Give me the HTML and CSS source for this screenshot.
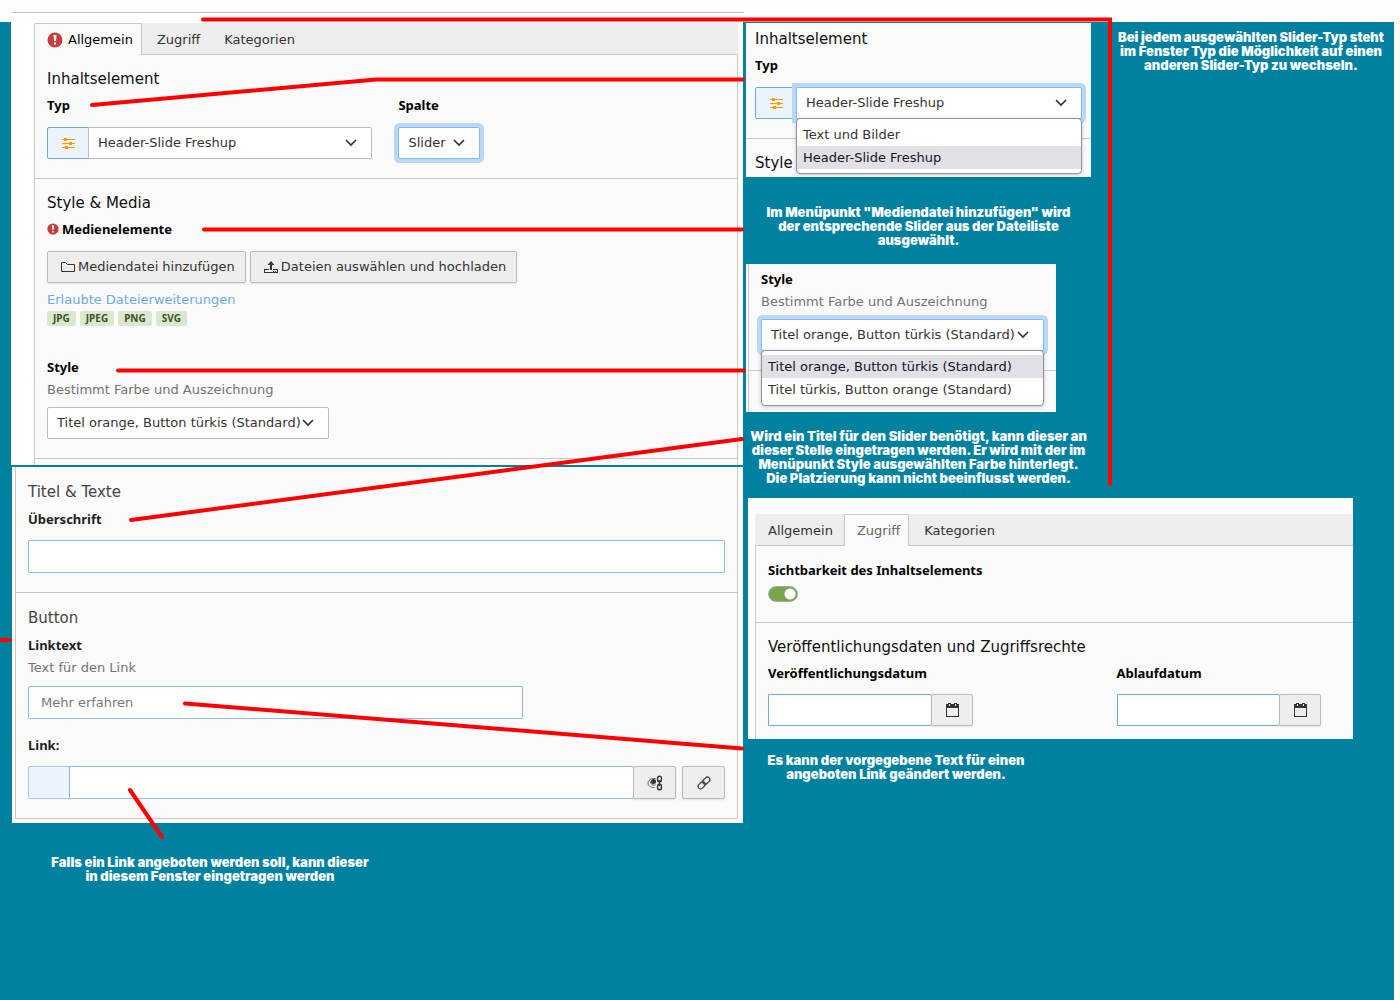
FILE: index.html
```html
<!DOCTYPE html>
<html lang="de">
<head>
    <meta charset="UTF-8">
    <meta name="viewport" content="width=device-width, initial-scale=1.0">
    <title>Slider Anleitung</title>
    <link rel="stylesheet" href="styles.css">
</head>
<body>
    <svg class="symbols" aria-hidden="true">
        <symbol id="icon-sliders" viewBox="0 0 16 16">
            <path fill="#ff9800" d="M2 4h13v1H2zM2 8h13v1H2zM2 12h13v1H2zM4 3h3v3H4zM9 7h3v3H9zM5 11h3v3H5z"/>
        </symbol>
        <symbol id="icon-error" viewBox="0 0 16 16">
            <circle cx="8" cy="8" r="7.500" fill="#c83c3c"/>
            <path fill="#fff" d="M6.500 3h3l-.5 6H7zM7 10.500h2v2H7z"/>
        </symbol>
        <symbol id="icon-folder" viewBox="0 0 16 16">
            <path fill="none" stroke="#333" d="M1.500 12.500v-9h4l2 2h7v7z"/>
        </symbol>
        <symbol id="icon-upload" viewBox="0 0 16 16">
            <path fill="#333" d="M8 2l3.500 4H9v5H7V6H4.500zM1 10h5v1H2v2h12v-2h-4v-1h5v4H1zM10 12h1v1h-1zM12 12h1v1h-1z"/>
        </symbol>
        <symbol id="icon-calendar" viewBox="0 0 16 16">
            <path fill="#333" fill-rule="evenodd" d="M2 2h2V1h3v1h3V1h3v1h2v13H2zM3 6v8h11V6zM5 2v2h1V2zM11 2v2h1V2z"/>
        </symbol>
        <symbol id="icon-link" viewBox="0 0 16 16">
            <g fill="none" stroke="#444" stroke-width="1.300" transform="rotate(-45 8 8)">
                <rect x="0.700" y="5.500" width="8" height="5" rx="2.500"/>
                <rect x="7.300" y="5.500" width="8" height="5" rx="2.500"/>
            </g>
        </symbol>
        <symbol id="icon-preview-link" viewBox="0 0 16 16">
            <path fill="none" stroke="#666" d="M8.500 3.500C4 3 1 5.500 1 8s2 4.500 6.500 4.500"/>
            <path fill="none" stroke="#666" d="M3.500 6.500c0 3 2 4 5 3.500"/>
            <circle cx="6.500" cy="6.500" r="2.500" fill="#333"/>
            <g fill="none" stroke="#333" stroke-width="1.400">
                <rect x="10.600" y="1.200" width="3.800" height="5.500" rx="1.800"/>
                <rect x="10.600" y="9.200" width="3.800" height="5.500" rx="1.800"/>
                <path d="M12.500 5v6"/>
            </g>
        </symbol>
    </svg>

    <div class="topbar"></div>

    <div class="board">
        <div class="column-left">
            <div class="shot shot-general">
                <div class="tabs">
                    <button class="tab active"><svg class="icon"><use href="#icon-error"/></svg>Allgemein</button>
                    <button class="tab">Zugriff</button>
                    <button class="tab">Kategorien</button>
                </div>
                <div class="panel">
                    <section class="section">
                        <h2>Inhaltselement</h2>
                        <div class="fields">
                            <div class="field field-type">
                                <label for="type">Typ</label>
                                <div class="input-group">
                                    <span class="addon"><svg class="icon"><use href="#icon-sliders"/></svg></span>
                                    <select id="type"><option>Header-Slide Freshup</option></select>
                                </div>
                            </div>
                            <div class="field">
                                <label for="column">Spalte</label>
                                <select id="column" class="focused"><option>Slider</option></select>
                            </div>
                        </div>
                    </section>
                    <section class="section">
                        <h2>Style &amp; Media</h2>
                        <p class="label"><svg class="icon-small"><use href="#icon-error"/></svg>Medienelemente</p>
                        <div class="buttons">
                            <button class="btn"><svg class="icon"><use href="#icon-folder"/></svg>Mediendatei hinzufügen</button>
                            <button class="btn"><svg class="icon"><use href="#icon-upload"/></svg>Dateien auswählen und hochladen</button>
                        </div>
                        <a class="extensions" href="#">Erlaubte Dateierweiterungen</a>
                        <div class="badges">
                            <span>JPG</span>
                            <span>JPEG</span>
                            <span>PNG</span>
                            <span>SVG</span>
                        </div>
                        <div class="field field-style">
                            <label for="style">Style</label>
                            <p class="description">Bestimmt Farbe und Auszeichnung</p>
                            <select id="style" class="select-style"><option>Titel orange, Button türkis (Standard)</option></select>
                        </div>
                    </section>
                </div>
            </div>

            <div class="shot shot-texts">
                <div class="panel">
                    <section class="section">
                        <h2>Titel &amp; Texte</h2>
                        <label for="headline">Überschrift</label>
                        <input type="text" id="headline">
                    </section>
                    <section class="section">
                        <h2>Button</h2>
                        <label for="linktext">Linktext</label>
                        <p class="description">Text für den Link</p>
                        <input type="text" id="linktext" class="input-medium" value="Mehr erfahren">
                        <label for="link" class="label-link">Link:</label>
                        <div class="link-row">
                            <div class="input-group">
                                <span class="addon"></span>
                                <input type="text" id="link">
                                <button class="btn btn-icon" aria-label="Vorschau"><svg class="icon"><use href="#icon-preview-link"/></svg></button>
                            </div>
                            <button class="btn btn-icon" aria-label="Link"><svg class="icon"><use href="#icon-link"/></svg></button>
                        </div>
                    </section>
                </div>
            </div>

            <p class="note note-link">Falls ein Link angeboten werden soll, kann dieser<br>in diesem Fenster eingetragen werden</p>
        </div>

        <div class="column-right">
            <div class="row">
                <div class="stack">
                    <div class="shot shot-type">
                        <section class="section">
                            <h2>Inhaltselement</h2>
                            <label for="type-open">Typ</label>
                            <div class="input-group dropdown">
                                <span class="addon"><svg class="icon"><use href="#icon-sliders"/></svg></span>
                                <select id="type-open" class="focused"><option>Header-Slide Freshup</option></select>
                                <ul class="menu menu-type">
                                    <li>Text und Bilder</li>
                                    <li class="selected">Header-Slide Freshup</li>
                                </ul>
                            </div>
                        </section>
                        <section class="section">
                            <h2>Style</h2>
                        </section>
                    </div>
                    <p class="note note-media">Im Menüpunkt "Mediendatei hinzufügen" wird<br>der entsprechende Slider aus der Dateiliste<br>ausgewählt.</p>
                    <div class="shot shot-style">
                        <section class="section">
                            <label for="style-open">Style</label>
                            <p class="description">Bestimmt Farbe und Auszeichnung</p>
                            <div class="dropdown">
                                <select id="style-open" class="select-style focused"><option>Titel orange, Button türkis (Standard)</option></select>
                                <ul class="menu">
                                    <li class="selected">Titel orange, Button türkis (Standard)</li>
                                    <li>Titel türkis, Button orange (Standard)</li>
                                </ul>
                            </div>
                        </section>
                        <div class="rest"></div>
                    </div>
                    <p class="note note-title">Wird ein Titel für den Slider benötigt, kann dieser an<br>dieser Stelle eingetragen werden. Er wird mit der im<br>Menüpunkt Style ausgewählten Farbe hinterlegt.<br>Die Platzierung kann nicht beeinflusst werden.</p>
                </div>
                <p class="note note-type">Bei jedem ausgewählten Slider-Typ steht<br>im Fenster Typ die Möglichkeit auf einen<br>anderen Slider-Typ zu wechseln.</p>
            </div>

            <div class="shot shot-access">
                <div class="tabs">
                    <button class="tab">Allgemein</button>
                    <button class="tab active muted">Zugriff</button>
                    <button class="tab">Kategorien</button>
                </div>
                <div class="panel">
                    <section class="section">
                        <label for="visible">Sichtbarkeit des Inhaltselements</label>
                        <input type="checkbox" id="visible" class="toggle" checked>
                    </section>
                    <section class="section">
                        <h2>Veröffentlichungsdaten und Zugriffsrechte</h2>
                        <div class="dates">
                            <div class="field">
                                <label for="start">Veröffentlichungsdatum</label>
                                <div class="input-group">
                                    <input type="text" id="start">
                                    <button class="btn btn-icon" aria-label="Kalender"><svg class="icon"><use href="#icon-calendar"/></svg></button>
                                </div>
                            </div>
                            <div class="field">
                                <label for="end">Ablaufdatum</label>
                                <div class="input-group">
                                    <input type="text" id="end">
                                    <button class="btn btn-icon" aria-label="Kalender"><svg class="icon"><use href="#icon-calendar"/></svg></button>
                                </div>
                            </div>
                        </div>
                    </section>
                </div>
            </div>
            <p class="note note-text">Es kann der vorgegebene Text für einen<br>angeboten Link geändert werden.</p>
        </div>
    </div>

    <!-- red pointer lines from the fields to the notes -->
    <svg class="pointers" width="1120" height="860" viewBox="0 0 1120 860" aria-hidden="true">
        <path d="M203 19.500H1110V484"/>
        <path d="M92 105L376 79.500H743"/>
        <path d="M204 229.500H742"/>
        <path d="M118 370.500H744"/>
        <path d="M131 520L742 439"/>
        <path d="M185 703.500L742 748.500"/>
        <path d="M130 790L162 837"/>
        <path d="M0 640H10"/>
    </svg>
</body>
</html>
```
FILE: styles.css
```css
* {
    box-sizing: border-box;
}

body {
    margin: 0;
    min-height: 100vh;
    position: relative;
    background: #0081a0;
    border-right: 6px solid #fefefe;
    font-family: Verdana, "DejaVu Sans", sans-serif;
    font-size: 13px;
    line-height: 20px;
    color: #333;
}

h2, p, ul {
    margin: 0;
    padding: 0;
}

.symbols {
    position: absolute;
    width: 0;
    height: 0;
}

.topbar {
    height: 22px;
    background: #fefefe;
    padding: 12px 0 0 11px;
}

.topbar::before {
    content: "";
    display: block;
    width: 53%;
    height: 1px;
    background: #c3c3c3;
}

.board {
    display: grid;
    grid-template-columns: 732fr 648fr;
    gap: 3px;
    padding-left: 11px;
}

/* panels */
.shot {
    background: #fafafa;
}

.shot-general {
    background: #fff;
    padding: 1px 5px 0 23px;
}

.shot-general .section:last-child {
    border-bottom: 1px solid #c8c8c8;
}

.shot-general .panel {
    padding-bottom: 6px;
}

.shot-texts {
    background: #fff;
    margin: 2px 0 0 1px;
    padding: 0 5px 4px 3px;
}

.shot-texts .panel {
    border-bottom: 1px solid #c8c8c8;
}

.panel {
    background: #fafafa;
    border: 1px solid #c8c8c8;
    border-width: 0 1px;
}

.section {
    padding: 14px 12px 19px;
}

.section + .section {
    border-top: 1px solid #c8c8c8;
}

.tabs {
    display: flex;
    height: 32px;
    background: #ededed;
    border-bottom: 1px solid #c8c8c8;
    border-radius: 2px 2px 0 0;
}

.tab {
    display: flex;
    align-items: center;
    gap: 5px;
    height: 32px;
    padding: 0 8px 0 12px;
    border: 1px solid transparent;
    border-bottom: 0;
    background: none;
    font: inherit;
    color: #333;
}

.tab.active {
    background: #fafafa;
    border-color: #c8c8c8;
    border-radius: 2px 2px 0 0;
    color: #000;
}

.tab.muted {
    color: #666;
}

.tab + .tab {
    margin-left: 2px;
}

h2 {
    font-size: 15px;
    font-weight: normal;
    line-height: 20px;
    color: #111;
}

label, .label {
    display: block;
    margin: 6px 0 12px;
    font-family: "Noto Sans", sans-serif;
    font-weight: bold;
    color: #000;
}

.label {
    display: flex;
    align-items: center;
    gap: 3px;
}

.description {
    margin: -9px 0 7px;
    color: #737373;
}

.icon {
    width: 16px;
    height: 16px;
}

.icon-small {
    width: 12px;
    height: 12px;
}

/* form controls */
select, input[type="text"] {
    display: block;
    height: 32px;
    border: 1px solid #bbb;
    border-radius: 2px;
    background-color: #fff;
    font: inherit;
    color: #333;
}

select {
    appearance: none;
    padding: 0 33px 0 9px;
    background-image: url("data:image/svg+xml,%3Csvg xmlns='http://www.w3.org/2000/svg' width='12' height='8'%3E%3Cpath d='M1 1l5 5 5-5' fill='none' stroke='%23333' stroke-width='1.700'/%3E%3C/svg%3E");
    background-repeat: no-repeat;
    background-position: right 14px center;
}

.select-style {
    padding-right: 27px;
}

input[type="text"] {
    width: 100%;
    padding: 0 12px;
    border-color: #6daae0;
}

.focused {
    border-color: #80bdff;
    box-shadow: 0 0 0 4px #bad8f5;
    outline: none;
}

.input-group {
    display: flex;
}

.input-group select,
.input-group input[type="text"] {
    flex: 1;
    min-width: 0;
    border-radius: 0 2px 2px 0;
}

.addon {
    display: flex;
    align-items: center;
    justify-content: center;
    width: 42px;
    margin-right: -1px;
    background: #ebf3fb;
    border: 1px solid #6daae0;
    border-radius: 2px 0 0 2px;
}

.fields {
    display: flex;
    gap: 26px;
}

.field-type {
    width: 48%;
}

.field-style {
    margin-top: 31px;
}

.buttons {
    display: flex;
    gap: 4px;
}

.btn {
    display: flex;
    align-items: center;
    justify-content: center;
    gap: 2px;
    height: 32px;
    padding: 0 10px 0 12px;
    background: #eee;
    border: 1px solid #bbb;
    border-radius: 2px;
    box-shadow: 0 1px 2px rgba(0,0,0,0.1);
    font: inherit;
    color: #333;
}

.btn-icon {
    width: 42px;
    padding: 0;
    flex-shrink: 0;
}

.input-group .btn-icon {
    margin-left: -1px;
}

.extensions {
    display: block;
    margin-top: 7px;
    color: #6daae0;
    text-decoration: none;
}

.badges {
    display: flex;
    gap: 4px;
    margin-top: 1px;
}

.badges span {
    height: 15px;
    padding: 0 6px;
    background: #dbe8cf;
    border-radius: 2px;
    font-family: "Noto Sans", sans-serif;
    font-size: 10px;
    font-weight: bold;
    line-height: 15px;
    color: #3c5124;
}

.shot-texts .section {
    padding-top: 15px;
}

.shot-texts h2 {
    color: #444;
}

.shot-texts label {
    margin: 7px 0 11px;
    color: #222;
}

.shot-texts .description {
    margin: -8px 0 8px;
}

.shot-texts input[type="text"] {
    height: 33px;
    color: #777;
    border-color: #8fb9e4;
}

.shot-texts .addon {
    border-color: #a9c9ea;
}

.shot-texts .btn-icon {
    width: 43px;
    height: 33px;
}

.shot-texts input.input-medium {
    width: 71%;
}

.shot-texts .label-link {
    margin-top: 16px;
}

.link-row {
    display: flex;
    gap: 6px;
}

.link-row .input-group {
    flex: 1;
}

/* right side */
.row {
    display: flex;
}

.stack {
    width: 345px;
}

.shot-type {
    height: 154px;
    margin-top: 1px;
}

.shot-type .section {
    padding: 6px 9px 19px;
}

.shot-type .section + .section {
    padding-top: 14px;
}

.shot-style {
    width: 310px;
    height: 148px;
    margin-top: 17px;
    padding-left: 2px;
}

.shot-style .section,
.shot-style .rest {
    border-left: 1px solid #c8c8c8;
}

.shot-style .section {
    padding-top: 0;
    border-bottom: 1px solid #c8c8c8;
}

.shot-style label {
    margin-top: 0;
    padding-top: 5px;
}

.shot-style .rest {
    height: 41px;
}

.dropdown {
    position: relative;
}

.shot-style select {
    width: 100%;
}

.menu {
    position: absolute;
    top: 31px;
    left: 0;
    right: 0;
    z-index: 1;
    padding: 4px 0;
    background: #fff;
    border: 1px solid #8f8f9d;
    border-radius: 4px;
    box-shadow: 0 1px 4px rgba(0,0,0,0.2);
    list-style: none;
}

.menu-type {
    left: 41px;
}

.menu li {
    padding: 0 6px;
    line-height: 23px;
}

.menu .selected {
    background: #e0e0e6;
    color: #15141a;
}

.shot-access {
    margin: 13px 41px 0 2px;
    padding: 16px 0 0 7px;
    background: #fff;
}

.shot-access .panel {
    border-right: 0;
}

.shot-access .section {
    padding-bottom: 20px;
}

.shot-access .section:last-child {
    padding-bottom: 13px;
}

.shot-access label {
    margin-bottom: 11px;
}

.shot-access .section:first-child label {
    margin: 0 0 6px;
}

.toggle {
    appearance: none;
    display: block;
    width: 30px;
    height: 16px;
    margin: 0;
    border: 1px solid #aaa;
    border-radius: 8px;
    background: radial-gradient(circle at 21px 7px, #fff 5px, #79a548 6px);
}

.dates {
    display: grid;
    grid-template-columns: 1fr 1fr;
    gap: 144px;
    padding-right: 20px;
}

/* explanations */
.note {
    font-family: "Arial Black", Inter, sans-serif;
    font-size: 13px;
    font-weight: 900;
    line-height: 14px;
    text-align: center;
    white-space: nowrap;
    color: #fff;
}

.note-media {
    margin-top: 28px;
}

.note-title {
    margin-top: 17px;
}

.note-type {
    flex: 1;
    padding: 8px 0 0 17px;
}

.note-text {
    width: 300px;
    margin-top: 14px;
}

.note-link {
    width: 398px;
    margin-top: 32px;
}

.pointers {
    position: absolute;
    top: 0;
    left: 0;
    z-index: 2;
    pointer-events: none;
}

.pointers path {
    fill: none;
    stroke: #f00;
    stroke-width: 4;
    stroke-linecap: round;
}
```
